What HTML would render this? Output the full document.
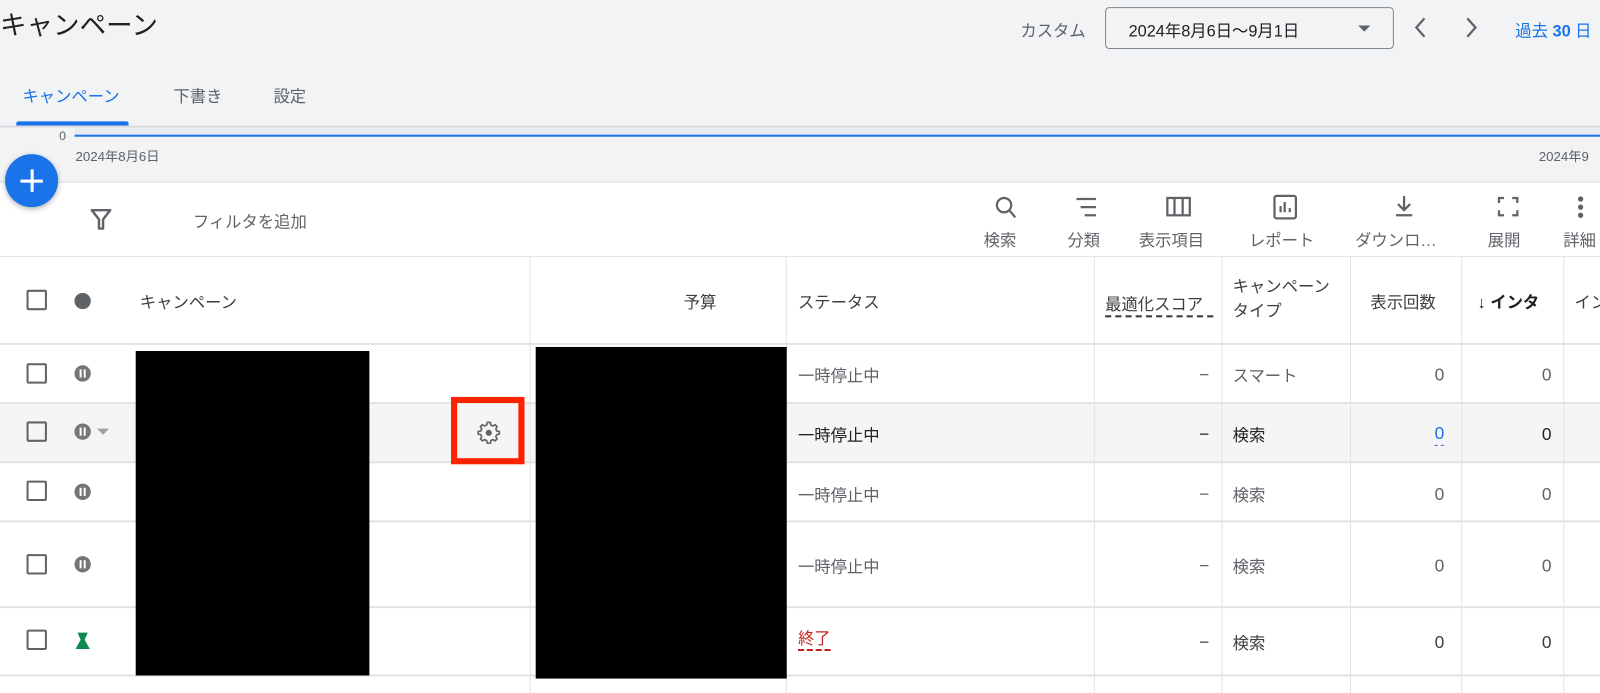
<!DOCTYPE html>
<html><head><meta charset="utf-8"><style>
*{margin:0;padding:0;box-sizing:border-box}
body{width:1600px;height:679px;overflow:hidden;background:#fff;font-family:"Liberation Sans","Noto Sans CJK JP",sans-serif;color:#3c4043;position:relative}
#w{position:absolute;left:0;top:0;width:1568px;height:666px;transform:scale(1.0204);transform-origin:0 0}
.a{position:absolute;white-space:nowrap}
.g{color:#5f6368}
.cb{position:absolute;left:26px;width:20px;height:20px;border:2px solid #5f6368;border-radius:2px}
.pa{position:absolute;left:73px;width:16px;height:16px;border-radius:50%;background:#757575}
.pa:after{content:"";position:absolute;left:5px;top:4px;width:2px;height:8px;background:#fff;box-shadow:4px 0 0 #fff}
.hl{position:absolute;left:0;width:1600px;height:2px;background:#e3e3e3}
.vl{position:absolute;width:1px;background:#e3e3e3;top:252px;height:427px}
.num{position:absolute;font-size:17px;text-align:right;line-height:24px;margin-top:1px}
</style></head><body><div id="w">
<div class="a" style="left:0;top:0;width:1600px;height:178px;background:#f1f3f4"></div>
<div class="a" style="left:0;top:5px;font-size:26px;color:#202124">キャンペーン</div>
<div class="a g" style="left:1000px;top:17px;font-size:16px">カスタム</div>
<div class="a" style="left:1083px;top:7px;width:283px;height:41px;border:1px solid #80868b;border-radius:4px;background:#f1f3f4"></div>
<div class="a" style="left:1106px;top:17px;font-size:16px;color:#202124">2024年8月6日〜9月1日</div>
<div class="a" style="left:1331px;top:25px;width:0;height:0;border-left:6px solid transparent;border-right:6px solid transparent;border-top:6px solid #5f6368"></div>
<svg class="a" style="left:1380px;top:14px" width="80" height="26"><path d="M16 4 L8 13 L16 22" fill="none" stroke="#5f6368" stroke-width="2.2"/><path d="M58 4 L66 13 L58 22" fill="none" stroke="#5f6368" stroke-width="2.2"/></svg>
<div class="a" style="left:1485px;top:17px;font-size:16px;color:#1a73e8">過去 <b>30</b> 日</div>
<div class="a" style="left:22px;top:81px;font-size:16px;color:#1a73e8">キャンペーン</div>
<div class="a g" style="left:170px;top:81px;font-size:16px">下書き</div>
<div class="a g" style="left:268px;top:81px;font-size:16px">設定</div>
<div class="a" style="left:16px;top:119px;width:110px;height:4px;background:#1a73e8;border-radius:2px 2px 0 0"></div>
<div class="a" style="left:0;top:123px;width:1600px;height:2px;background:#dadce0"></div>
<div class="a" style="left:73px;top:125px;width:1527px;height:8px;background:#e8eaed"></div>
<div class="a" style="left:73px;top:132px;width:1527px;height:2px;background:#1a73e8"></div>
<div class="a g" style="left:58px;top:126px;font-size:12px">0</div>
<div class="a g" style="left:74px;top:143px;font-size:13px">2024年8月6日</div>
<div class="a g" style="left:1508px;top:143px;font-size:13px">2024年9</div>
<div class="a" style="left:0;top:178px;width:1600px;height:1px;background:#dadce0"></div>
<div class="a" style="left:5px;top:151px;width:52px;height:52px;border-radius:50%;background:#1a73e8;box-shadow:0 2px 5px rgba(0,0,0,.3)"></div>
<div class="a" style="left:20px;top:176px;width:22px;height:2.5px;background:#fff"></div>
<div class="a" style="left:30px;top:166px;width:2.5px;height:22px;background:#fff"></div>
<svg class="a" style="left:88px;top:204px" width="22" height="22"><path d="M2 2 H20 L13 11 V20 H9 V11 Z" fill="none" stroke="#5f6368" stroke-width="2.4" stroke-linejoin="round"/></svg>
<div class="a g" style="left:189px;top:204px;font-size:16px">フィルタを追加</div>
<svg class="a" style="left:970px;top:190px" width="600" height="28" fill="none" stroke="#5f6368" stroke-width="2.2">
<circle cx="14" cy="11" r="7"/><path d="M19 16 L25 23"/>
<path d="M85 5 H104 M89 13 H104 M93 21 H104"/>
<rect x="174" y="4" width="22" height="17"/><path d="M181 4 V21 M189 4 V21"/>
<rect x="279" y="2" width="21" height="22" rx="2"/><path d="M285 18 V12 M289 18 V8 M294 18 V14"/>
<path d="M406 2 V15 M400 10 L406 16 L412 10 M398 21 H414"/>
<path d="M499 9 V4 H504 M512 4 H517 V9 M499 16 V21 H504 M512 21 H517 V16"/>
<circle cx="579" cy="5" r="1.5" fill="#5f6368"/><circle cx="579" cy="13" r="1.5" fill="#5f6368"/><circle cx="579" cy="21" r="1.5" fill="#5f6368"/>
</svg>
<div class="a g" style="left:964px;top:222px;font-size:16px">検索</div>
<div class="a g" style="left:1046px;top:222px;font-size:16px">分類</div>
<div class="a g" style="left:1116px;top:222px;font-size:16px">表示項目</div>
<div class="a g" style="left:1224px;top:222px;font-size:16px">レポート</div>
<div class="a g" style="left:1328px;top:222px;font-size:16px">ダウンロ…</div>
<div class="a g" style="left:1458px;top:222px;font-size:16px">展開</div>
<div class="a g" style="left:1532px;top:222px;font-size:16px">詳細</div>
<div class="hl" style="top:251px;height:1px"></div>
<div class="hl" style="top:336px"></div>
<div class="a" style="left:0;top:395px;width:1600px;height:58px;background:#f5f5f5"></div>
<div class="hl" style="top:394px"></div>
<div class="hl" style="top:452px"></div>
<div class="hl" style="top:510px"></div>
<div class="hl" style="top:594px"></div>
<div class="hl" style="top:661px"></div>
<div class="vl" style="left:519px"></div><div class="vl" style="left:770px"></div><div class="vl" style="left:1072px"></div><div class="vl" style="left:1197px"></div><div class="vl" style="left:1323px"></div><div class="vl" style="left:1432px"></div><div class="vl" style="left:1532px"></div>
<div class="cb" style="top:284px"></div>
<div class="a" style="left:73px;top:287px;width:16px;height:16px;border-radius:50%;background:#5f6368"></div>
<div class="a" style="left:137px;top:283px;font-size:16px">キャンペーン</div>
<div class="a" style="left:670px;top:283px;font-size:16px">予算</div>
<div class="a" style="left:782px;top:283px;font-size:16px">ステータス</div>
<div class="a" style="left:1083px;top:285px;width:106px;overflow:hidden;font-size:16px;border-bottom:2px dashed #3c4043">最適化スコア</div>
<div class="a" style="left:1208px;top:270px;font-size:16px;line-height:24px">キャンペーン<br>タイプ</div>
<div class="a" style="left:1343px;top:283px;font-size:16px">表示回数</div>
<div class="a" style="left:1448px;top:283px;font-size:16px;color:#202124;font-weight:bold">↓ インタ</div>
<div class="a" style="left:1543px;top:283px;font-size:16px">イン</div>
<div class="cb" style="top:356px"></div><div class="pa" style="top:358px"></div>
<div class="cb" style="top:413px"></div><div class="pa" style="top:415px"></div>
<div class="a" style="left:95px;top:420px;width:0;height:0;border-left:6px solid transparent;border-right:6px solid transparent;border-top:6px solid #9aa0a6"></div>
<div class="cb" style="top:471px"></div><div class="pa" style="top:474px"></div>
<div class="cb" style="top:543px"></div><div class="pa" style="top:545px"></div>
<div class="cb" style="top:617px"></div>
<svg class="a" style="left:72px;top:619px" width="18" height="18"><path d="M4 1 H14 L11 8 L16 17 H2 L7 8 Z" fill="#0d8a4f"/></svg>
<div class="a" style="left:133px;top:344px;width:229px;height:318px;background:#000"></div>
<div class="a" style="left:525px;top:340px;width:246px;height:325px;background:#000"></div>
<div class="a" style="left:442px;top:389px;width:72px;height:66px;border:6px solid #ff2200;background:#f5f5f5"></div>
<svg class="a" style="left:467px;top:411px" width="24" height="24" viewBox="0 0 24 24"><path d="M12 3 l1.5 0 .5 2.5 2 1 2.3-1.2 1.8 1.8-1.2 2.3 1 2 2.5.5 v2.5 l-2.5.5-1 2 1.2 2.3-1.8 1.8-2.3-1.2-2 1-.5 2.5h-3l-.5-2.5-2-1-2.3 1.2-1.8-1.8 1.2-2.3-1-2-2.5-.5v-2.5l2.5-.5 1-2-1.2-2.3 1.8-1.8 2.3 1.2 2-1 .5-2.5z" fill="none" stroke="#5f6368" stroke-width="1.6"/><circle cx="12" cy="13.2" r="3" fill="#5f6368"/></svg>
<div class="a g" style="left:782px;top:355px;font-size:16px">一時停止中</div>
<div class="a" style="left:782px;top:413px;font-size:16px;color:#202124">一時停止中</div>
<div class="a g" style="left:782px;top:472px;font-size:16px">一時停止中</div>
<div class="a g" style="left:782px;top:542px;font-size:16px">一時停止中</div>
<div class="a" style="left:782px;top:617px;font-size:16px;color:#c5221f;border-bottom:2px dashed #c5221f;line-height:19px">終了</div>
<div class="num g" style="left:1175px;top:355px">−</div><div class="num" style="left:1175px;top:413px;color:#202124">−</div><div class="num g" style="left:1175px;top:472px">−</div><div class="num g" style="left:1175px;top:542px">−</div><div class="num" style="left:1175px;top:617px">−</div>
<div class="a g" style="left:1208px;top:355px;font-size:16px">スマート</div>
<div class="a" style="left:1208px;top:413px;font-size:16px;color:#202124">検索</div>
<div class="a g" style="left:1208px;top:472px;font-size:16px">検索</div>
<div class="a g" style="left:1208px;top:542px;font-size:16px">検索</div>
<div class="a" style="left:1208px;top:617px;font-size:16px">検索</div>
<div class="num g" style="left:1406px;top:355px">0</div><div class="num" style="left:1406px;top:413px;color:#1a73e8;border-bottom:1px dashed #1a73e8;line-height:22px">0</div><div class="num g" style="left:1406px;top:472px">0</div><div class="num g" style="left:1406px;top:542px">0</div><div class="num" style="left:1406px;top:617px">0</div>
<div class="num g" style="left:1511px;top:355px">0</div><div class="num" style="left:1511px;top:413px;color:#202124">0</div><div class="num g" style="left:1511px;top:472px">0</div><div class="num g" style="left:1511px;top:542px">0</div><div class="num" style="left:1511px;top:617px">0</div>
</div></body></html>
